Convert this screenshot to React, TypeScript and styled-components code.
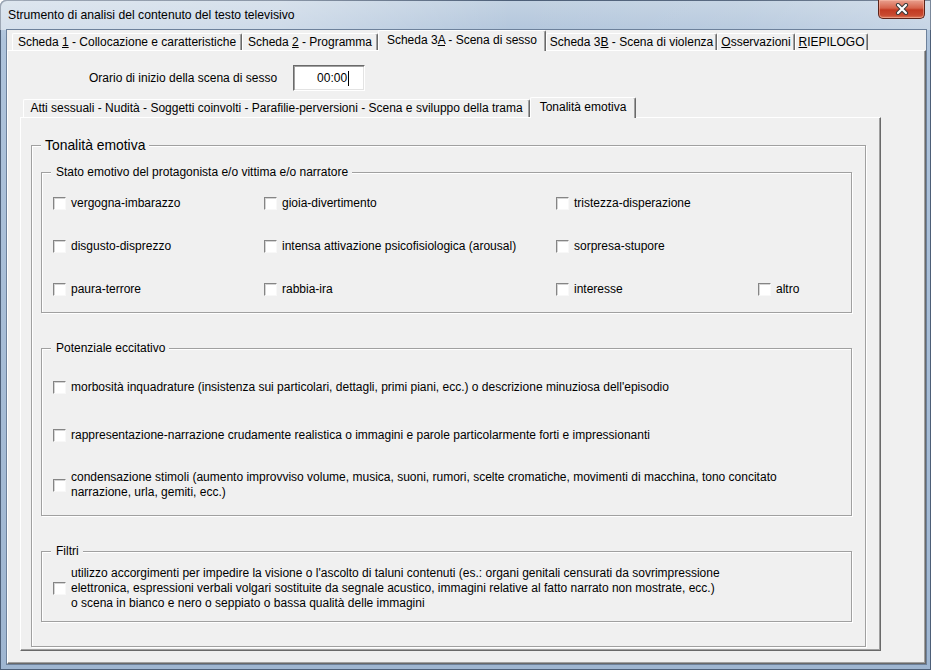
import React from "react";
import styled, { createGlobalStyle } from "styled-components";

const Global = createGlobalStyle`
  html, body { margin: 0; padding: 0; background: #ffffff; }
  * { box-sizing: border-box; }
`;

const Window = styled.div`
  width: 931px;
  height: 670px;
  display: flex;
  flex-direction: column;
  overflow: hidden;
  border-top-left-radius: 6px;
  background: linear-gradient(180deg, #c3d2e2 0px, #aec3db 40px, #9fb6d1 100%);
  box-shadow: inset 1px 1px 0 #4d5f78, inset -1px -1px 0 #4d5f78;
  font-family: "Liberation Sans", Arial, sans-serif;
  font-size: 12px;
  color: #000;
`;

const TitleBar = styled.div`
  height: 30px;
  flex: none;
  display: flex;
  justify-content: space-between;
  align-items: flex-start;
  background: linear-gradient(
    90deg,
    rgba(255, 255, 255, 0.45) 0%,
    rgba(255, 255, 255, 0.35) 30%,
    rgba(255, 255, 255, 0) 55%,
    rgba(255, 255, 255, 0.08) 80%,
    rgba(255, 255, 255, 0.25) 100%
  );
`;

const Title = styled.div`
  padding: 8px 0 0 8px;
  line-height: 14px;
  font-size: 12.2px;
  color: #000;
`;

const CloseButton = styled.div`
  width: 47px;
  height: 19px;
  margin-right: 6px;
  border: 1px solid #5c2319;
  border-top: none;
  border-radius: 0 0 5px 5px;
  background: linear-gradient(180deg, #e9a08f 0%, #d6634b 45%, #c23a22 55%, #c84a30 85%, #dc7a5c 100%);
  box-shadow: inset 0 0 0 1px rgba(255, 200, 180, 0.45);
  display: flex;
  align-items: center;
  justify-content: center;
`;

const Client = styled.div`
  flex: 1;
  margin: 0 5px 6px 7px;
  background: #f0f0f0;
  box-shadow: 0 0 0 1px #6d819b;
  display: flex;
  flex-direction: column;
`;

const TabStrip = styled.div<{ $height: number; $indent: number }>`
  height: ${(p) => p.$height}px;
  flex: none;
  display: flex;
  align-items: flex-end;
  padding-left: ${(p) => p.$indent}px;
  position: relative;
  z-index: 2;
`;

const Tab = styled.div<{ $active?: boolean; $w: number; $h: number }>`
  width: ${(p) => p.$w}px;
  height: ${(p) => p.$h}px;
  margin-bottom: ${(p) => (p.$active ? -1 : 0)}px;
  position: relative;
  z-index: ${(p) => (p.$active ? 3 : 1)};
  background: #f0f0f0;
  border-top: 1px solid #ffffff;
  border-left: 1px solid #ffffff;
  border-right: 1px solid #696969;
  box-shadow: inset -1px 0 0 #a0a0a0;
  border-radius: 2px 2px 0 0;
  display: flex;
  align-items: center;
  justify-content: center;
  padding-bottom: ${(p) => (p.$active ? 3 : 1)}px;
  white-space: nowrap;
  line-height: 14px;
  flex: none;
`;

const Panel = styled.div`
  flex: 1;
  display: flex;
  flex-direction: column;
  border-top: 1px solid #ffffff;
  border-left: 1px solid #ffffff;
  border-right: 1px solid #696969;
  border-bottom: 1px solid #696969;
  box-shadow: inset -1px -1px 0 #a0a0a0;
  background: #f0f0f0;
  min-height: 0;
`;

const TimeRow = styled.div`
  display: flex;
  align-items: center;
  gap: 16px;
  margin-top: 14px;
  padding-left: 81px;
  flex: none;
`;

const TimeBox = styled.div`
  width: 72px;
  height: 26px;
  background: #ffffff;
  border-top: 1px solid #6a6a6a;
  border-left: 1px solid #6a6a6a;
  border-right: 1px solid #ffffff;
  border-bottom: 1px solid #ffffff;
  box-shadow: inset 1px 1px 0 #a0a0a0, inset -1px -1px 0 #e3e3e3;
  display: flex;
  justify-content: flex-end;
  align-items: center;
  padding-right: 15px;
`;

const Caret = styled.span`
  width: 1px;
  height: 15px;
  background: #000;
  margin-left: 1px;
`;

const SubArea = styled.div`
  flex: 1;
  display: flex;
  flex-direction: column;
  margin: 6px 44px 12px 12px;
  min-height: 0;
`;

const Group = styled.fieldset<{ $pad: string; $m: string }>`
  margin: ${(p) => p.$m};
  padding: ${(p) => p.$pad};
  min-width: 0;
  border: 1px solid #a0a0a0;
  box-shadow: inset 1px 1px 0 #ffffff, 1px 1px 0 #ffffff;
  flex: none;
`;

const Legend = styled.legend<{ $big?: boolean; $ml: number }>`
  margin-left: ${(p) => p.$ml}px;
  padding: ${(p) => (p.$big ? "0 4px" : "0 4px 0 5px")};
  font-size: ${(p) => (p.$big ? 13.9 : 12)}px;
  line-height: ${(p) => (p.$big ? 17 : 13)}px;
  background: #f0f0f0;
  position: relative;
`;

const OptionGrid = styled.div`
  display: grid;
  grid-template-columns: 211px 292px 202px auto;
  grid-template-rows: 14px 14px 14px;
  row-gap: 29px;
`;

const Option = styled.label<{ $mt?: number }>`
  display: flex;
  align-items: center;
  gap: 5px;
  line-height: 15px;
  margin-top: ${(p) => p.$mt || 0}px;
  white-space: nowrap;
`;

const GridOption = styled(Option)`
  line-height: 14px;
`;

const Box = styled.span`
  width: 13px;
  height: 13px;
  flex: none;
  background: #ffffff;
  border-top: 1px solid #858585;
  border-left: 1px solid #858585;
  border-right: 1px solid #f8f8f8;
  border-bottom: 1px solid #f8f8f8;
  box-shadow: inset 1px 1px 0 #d4d4d4;
`;

const mainTabs: { label: React.ReactNode; w: number; active?: boolean }[] = [
  { label: <>Scheda <u>1</u> - Collocazione e caratteristiche</>, w: 230 },
  { label: <>Scheda <u>2</u> - Programma</>, w: 136 },
  { label: <>Scheda 3<u>A</u> - Scena di sesso</>, w: 168, active: true },
  { label: <>Scheda 3<u>B</u> - Scena di violenza</>, w: 171 },
  { label: <><u>O</u>sservazioni</>, w: 78 },
  { label: <><u>R</u>IEPILOGO</>, w: 73 },
];

const emotions = [
  "vergogna-imbarazzo",
  "gioia-divertimento",
  "tristezza-disperazione",
  null,
  "disgusto-disprezzo",
  "intensa attivazione psicofisiologica (arousal)",
  "sorpresa-stupore",
  null,
  "paura-terrore",
  "rabbia-ira",
  "interesse",
  "altro",
];

export default function App() {
  return (
    <>
      <Global />
      <Window>
        <TitleBar>
          <Title>Strumento di analisi del contenuto del testo televisivo</Title>
          <CloseButton>
            <svg width="14" height="12" viewBox="0 0 14 12">
              <path d="M3 2 L11 10 M11 2 L3 10" stroke="#3a3a3a" strokeWidth="4.2" strokeLinecap="round" />
              <path d="M3 2 L11 10 M11 2 L3 10" stroke="#ffffff" strokeWidth="2.2" strokeLinecap="round" />
            </svg>
          </CloseButton>
        </TitleBar>
        <Client>
          <TabStrip $height={20} $indent={5}>
            {mainTabs.map((t, i) => (
              <Tab key={i} $w={t.w} $h={t.active ? 21 : 17} $active={t.active}>
                <span>{t.label}</span>
              </Tab>
            ))}
          </TabStrip>
          <Panel>
            <TimeRow>
              <span>Orario di inizio della scena di sesso</span>
              <TimeBox>
                <span>00:00</span>
                <Caret />
              </TimeBox>
            </TimeRow>
            <SubArea>
              <TabStrip $height={20} $indent={3}>
                <Tab $w={507} $h={18}>
                  <span>Atti sessuali - Nudità - Soggetti coinvolti - Parafilie-perversioni - Scena e sviluppo della trama</span>
                </Tab>
                <Tab $w={106} $h={21} $active>
                  <span>Tonalità emotiva</span>
                </Tab>
              </TabStrip>
              <Panel>
                <Group $m="19px 14px 0 10px" $pad="12px 13px 24px 9px">
                  <Legend $big $ml={0}>Tonalità emotiva</Legend>

                  <Group $m="0" $pad="17px 11px 16px 11px">
                    <Legend $ml={-2}>Stato emotivo del protagonista e/o vittima e/o narratore</Legend>
                    <OptionGrid>
                      {emotions.map((e, i) =>
                        e ? (
                          <GridOption key={i}>
                            <Box />
                            <span>{e}</span>
                          </GridOption>
                        ) : (
                          <span key={i} />
                        )
                      )}
                    </OptionGrid>
                  </Group>

                  <Group $m="29px 0 0 0" $pad="25px 11px 15px 11px">
                    <Legend $ml={-2}>Potenziale eccitativo</Legend>
                    <Option>
                      <Box />
                      <span>
                        morbosità inquadrature (insistenza sui particolari, dettagli, primi piani, ecc.) o descrizione minuziosa dell'episodio
                      </span>
                    </Option>
                    <Option $mt={33}>
                      <Box />
                      <span>
                        rappresentazione-narrazione crudamente realistica o immagini e parole particolarmente forti e impressionanti
                      </span>
                    </Option>
                    <Option $mt={27}>
                      <Box />
                      <span>
                        condensazione stimoli (aumento improvviso volume, musica, suoni, rumori, scelte cromatiche, movimenti di macchina, tono concitato
                        <br />
                        narrazione, urla, gemiti, ecc.)
                      </span>
                    </Option>
                  </Group>

                  <Group $m="29px 0 0 0" $pad="8px 11px 10px 11px">
                    <Legend $ml={-2}>Filtri</Legend>
                    <Option>
                      <Box />
                      <span>
                        utilizzo accorgimenti per impedire la visione o l'ascolto di taluni contenuti (es.: organi genitali censurati da sovrimpressione
                        <br />
                        elettronica, espressioni verbali volgari sostituite da segnale acustico, immagini relative al fatto narrato non mostrate, ecc.)
                        <br />
                        o scena in bianco e nero o seppiato o bassa qualità delle immagini
                      </span>
                    </Option>
                  </Group>
                </Group>
              </Panel>
            </SubArea>
          </Panel>
        </Client>
      </Window>
    </>
  );
}
